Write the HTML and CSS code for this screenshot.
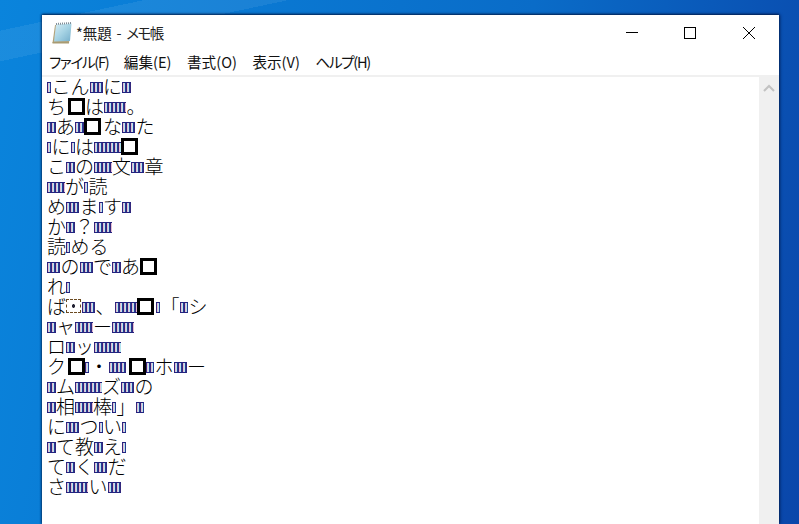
FILE: index.html
```html
<!DOCTYPE html>
<html lang="ja">
<head>
<meta charset="utf-8">
<title>*無題 - メモ帳</title>
<link rel="stylesheet" href="styles.css">
</head>
<body>
<div class="desktop">
  <div class="window">
    <header class="titlebar">
      <div class="title">
        <svg class="app-icon" width="22" height="22" viewBox="0 0 22 22">
          <defs><linearGradient id="paper" x1="0" y1="0" x2="1" y2="1"><stop offset="0" stop-color="#d8eef5"/><stop offset=".5" stop-color="#a6d3e4"/><stop offset="1" stop-color="#74aecb"/></linearGradient></defs>
          <path d="M4 3 L20 2 L18 21 L1.5 21 Z" fill="#b3a27a"/>
          <path d="M5 2.5 L20.5 1.5 L19 19 L3 19.5 Z" fill="url(#paper)"/>
          <path d="M5 2 L20.5 1" stroke="#7f8d98" stroke-width="2" stroke-dasharray="1 1" fill="none"/>
          <path d="M1.5 20.8 L18 20.8" stroke="#a89a72" stroke-width="1.4"/>
        </svg>
        <span class="title-text">*無題 - <span class="title-kana">メモ帳</span></span>
      </div>
      <div class="controls">
        <svg class="ctl ctl-min" width="14" height="14" viewBox="0 0 14 14"><path d="M1 6.5H13" stroke="#000" fill="none"/></svg>
        <svg class="ctl ctl-max" width="14" height="14" viewBox="0 0 14 14"><rect x="1.5" y="1.5" width="11" height="11" stroke="#000" fill="none"/></svg>
        <svg class="ctl ctl-close" width="14" height="14" viewBox="0 0 14 14"><path d="M1 1L13 13M13 1L1 13" stroke="#000" fill="none"/></svg>
      </div>
    </header>
    <nav class="menubar">
      <span class="kana">ファイル(F)</span><span>編集(E)</span><span>書式(O)</span><span>表示(V)</span><span class="kana">ヘルプ(H)</span>
    </nav>
    <div class="client">
      <div class="editor">
        <div class="line"><i class="t t1"></i>こん<i class="t t3"></i>に<i class="t t2"></i></div>
        <div class="line">ち<b class="box push"></b>は<i class="t t5"></i>。</div>
        <div class="line"><i class="t t2"></i>あ<i class="t t2"></i><b class="box"></b>な<i class="t t3"></i>た</div>
        <div class="line"><i class="t t1"></i>に<i class="t t1"></i>は<i class="t t6"></i><b class="box"></b></div>
        <div class="line">こ<i class="t t2"></i>の<i class="t t4"></i>文<i class="t t3"></i>章</div>
        <div class="line"><i class="t t4"></i>が<i class="t t1"></i>読</div>
        <div class="line">め<i class="t t3"></i>ま<i class="t t1"></i>す<i class="t t2"></i></div>
        <div class="line">か<i class="t t2"></i>？<i class="t t4"></i></div>
        <div class="line">読<i class="t t1"></i>める</div>
        <div class="line"><i class="t t3"></i>の<i class="t t3"></i>で<i class="t t2"></i>あ<b class="box"></b></div>
        <div class="line">れ<i class="t t1"></i></div>
        <div class="line">ば<b class="dot"></b><i class="t t3"></i>、<i class="t t5"></i><b class="box"></b><i class="t t1"></i>「<i class="t t2"></i>シ</div>
        <div class="line"><i class="t t2"></i>ャ<i class="t t4"></i>ー<i class="t t5"></i></div>
        <div class="line">ロ<i class="t t2"></i>ッ<i class="t t6"></i></div>
        <div class="line">ク<b class="box push"></b><i class="t t1"></i>・<i class="t t4"></i><b class="box push"></b><i class="t t2"></i>ホ<i class="t t3"></i>ー</div>
        <div class="line"><i class="t t2"></i>ム<i class="t t6"></i>ズ<i class="t t3"></i>の</div>
        <div class="line"><i class="t t2"></i>相<i class="t t4"></i>棒<i class="t t1"></i>」<i class="t t2"></i></div>
        <div class="line">に<i class="t t3"></i>つ<i class="t t1"></i>い<i class="t t1"></i></div>
        <div class="line"><i class="t t2"></i>て教<i class="t t2"></i>え<i class="t t1"></i></div>
        <div class="line">て<i class="t t2"></i>く<i class="t t3"></i>だ</div>
        <div class="line">さ<i class="t t5"></i>い<i class="t t3"></i></div>
      </div>
      <aside class="scrollbar">
        <svg width="12" height="8" viewBox="0 0 12 8"><path d="M1 7L6 2L11 7" stroke="#c2c2c2" stroke-width="2" fill="none"/></svg>
      </aside>
    </div>
  </div>
</div>
</body>
</html>
```
FILE: styles.css
```css
*, *::before { box-sizing: border-box; }
html, body { margin: 0; height: 100%; overflow: hidden; }
.desktop {
  width: 799px; height: 524px; padding: 15px 20px 0 42px; overflow: hidden;
  background:
    linear-gradient(168deg, transparent 0 30px, rgba(255,255,255,.07) 30px 60px, transparent 60px),
    linear-gradient(100deg, #0a84dc 0%, #0a6cc8 60%, #0a46aa 100%);
}
.window {
  height: 509px; background: #fff; display: flex; flex-direction: column;
  box-shadow: 0 -1px 2px rgba(0,20,60,.65), 1px 0 3px rgba(0,20,60,.6), -1px 0 2px rgba(0,20,60,.4);
  font-family: "Noto Sans CJK JP", "Noto Sans", sans-serif; color: #000;
}
.titlebar { height: 35px; display: flex; justify-content: space-between; align-items: center; }
.title { display: flex; align-items: center; padding-left: 9px; gap: 3px; }
.app-icon { flex: none; }
.title-text { font-size: 14.5px; color: #222; line-height: 20px; font-feature-settings: "palt"; word-spacing: 1.5px; }
.title-kana { letter-spacing: -1.5px; }
.controls { display: flex; align-items: center; padding-right: 23px; }
.ctl { display: block; }
.ctl-max { margin-left: 44px; }
.ctl-close { margin-left: 45px; }
.menubar {
  height: 27px; display: flex; gap: 15.5px; padding: 0 0 2px 7px; align-items: center;
  font-size: 14.6px; border-bottom: 2px solid #f0f0f0; color: #111; font-feature-settings: "palt";
}
.kana { letter-spacing: -1.3px; }
.client { flex: 1; display: flex; min-height: 0; }
.editor { flex: 1; padding: 0 0 0 5px; font-size: 19px; font-weight: 300; color: #000; }
.line { height: 20px; line-height: 18px; display: flex; align-items: flex-start; white-space: nowrap; }
.t { display: block; height: 20px; flex: none; position: relative; }
.t::before {
  content: ""; position: absolute; top: 5px; left: 0; height: 11px; right: .5px;
  border-top: 1px solid #23237f; border-bottom: 1px solid #23237f;
  background: repeating-linear-gradient(90deg, #33287c 0 1px, #e6bcd2 1px 2px, #b4e6f0 2px 3px, #2a3a92 3px 4px);
}
.t1 { width: 4.5px; }
.t2 { width: 9px; }
.t3 { width: 13.5px; }
.t4 { width: 18px; }
.t5 { width: 22.5px; }
.t6 { width: 27px; }
.box { display: flex; width: 19px; height: 18px; flex: none; align-items: center; font-weight: 400; }
.push { justify-content: flex-end; }
.box::before { content: ""; width: 17px; height: 17px; border: 3px solid #000; flex: none; }
.dot { display: flex; width: 16px; height: 18px; flex: none; align-items: center; }
.dot::before { content: ""; width: 15px; height: 14px; border: 1px dashed #6b4a20; background: radial-gradient(circle, #223 0 1.5px, transparent 2px); }
.scrollbar { width: 20px; background: #f0f0f0; display: flex; justify-content: center; padding-top: 7px; align-items: flex-start; }
```
